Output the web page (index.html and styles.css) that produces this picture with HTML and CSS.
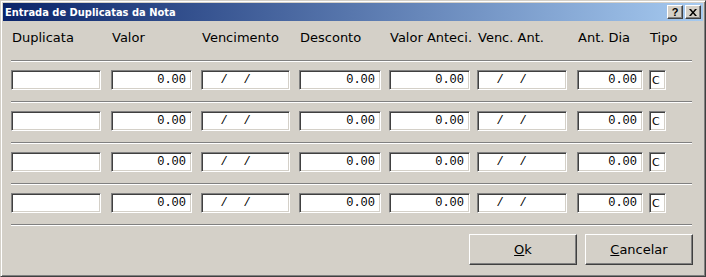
FILE: index.html
```html
<!DOCTYPE html>
<html lang="pt">
<head>
  <meta charset="UTF-8">
  <title>Entrada de Duplicatas da Nota</title>
  <link rel="stylesheet" href="styles.css">
</head>
<body>
  <div class="window">
    <div class="titlebar">
      <span class="title">Entrada de Duplicatas da Nota</span>
      <div class="caption">
        <button class="cap help">?</button>
        <button class="cap close">
          <svg width="8" height="7" viewBox="0 0 8 7"><path d="M0 0h2l2 2.5L6 0h2L5 3.5 8 7H6L4 4.5 2 7H0l3-3.5z" fill="#000"/></svg>
        </button>
      </div>
    </div>
    <div class="client">
      <div class="grid labels">
        <span>Duplicata</span>
        <span>Valor</span>
        <span>Vencimento</span>
        <span>Desconto</span>
        <span>Valor Anteci.</span>
        <span>Venc. Ant.</span>
        <span>Ant. Dia</span>
        <span>Tipo</span>
      </div>
      <div class="sep"></div>
      <div class="grid row">
        <input class="f-dup" value="">
        <input class="f-num w81" value="0.00">
        <input class="f-date" value="  /  /">
        <input class="f-num w82" value="0.00">
        <input class="f-num w81" value="0.00">
        <input class="f-date w90" value="  /  /">
        <input class="f-num w66" value="0.00">
        <input class="f-tipo" value="C">
      </div>
      <div class="sep"></div>
      <div class="grid row">
        <input class="f-dup" value="">
        <input class="f-num w81" value="0.00">
        <input class="f-date" value="  /  /">
        <input class="f-num w82" value="0.00">
        <input class="f-num w81" value="0.00">
        <input class="f-date w90" value="  /  /">
        <input class="f-num w66" value="0.00">
        <input class="f-tipo" value="C">
      </div>
      <div class="sep"></div>
      <div class="grid row">
        <input class="f-dup" value="">
        <input class="f-num w81" value="0.00">
        <input class="f-date" value="  /  /">
        <input class="f-num w82" value="0.00">
        <input class="f-num w81" value="0.00">
        <input class="f-date w90" value="  /  /">
        <input class="f-num w66" value="0.00">
        <input class="f-tipo" value="C">
      </div>
      <div class="sep"></div>
      <div class="grid row">
        <input class="f-dup" value="">
        <input class="f-num w81" value="0.00">
        <input class="f-date" value="  /  /">
        <input class="f-num w82" value="0.00">
        <input class="f-num w81" value="0.00">
        <input class="f-date w90" value="  /  /">
        <input class="f-num w66" value="0.00">
        <input class="f-tipo" value="C">
      </div>
      <div class="sep"></div>
      <div class="actions">
        <button class="btn"><u>O</u>k</button>
        <button class="btn"><u>C</u>ancelar</button>
      </div>
    </div>
  </div>
</body>
</html>
```

FILE: styles.css
```css
:root {
  --face: #d4d0c8;
  --shadow: #808080;
  --dark: #404040;
  --light: #ffffff;
}
body {
  margin: 0;
  background: var(--face);
  font-family: 'DejaVu Sans', sans-serif;
}
.window {
  width: 706px;
  height: 277px;
  box-sizing: border-box;
  background: var(--face);
  border-top: 1px solid var(--face);
  border-left: 1px solid var(--face);
  border-right: 1px solid var(--dark);
  border-bottom: 1px solid var(--dark);
  box-shadow: inset 1px 1px var(--light), inset -1px -1px var(--shadow);
  padding: 2px;
}
.titlebar {
  height: 18px;
  display: flex;
  align-items: center;
  justify-content: space-between;
  background: linear-gradient(to right, #0a246a, #a6caf0);
  padding: 0 2px 0 2px;
}
.title {
  color: #fff;
  font-family: 'DejaVu Sans Condensed', 'DejaVu Sans', sans-serif;
  font-weight: bold;
  font-size: 11px;
  line-height: 18px;
  padding-top: 1px;
}
.caption {
  display: flex;
  gap: 2px;
}
.cap {
  width: 16px;
  height: 14px;
  padding: 0;
  margin: 0;
  background: var(--face);
  border-top: 1px solid var(--light);
  border-left: 1px solid var(--light);
  border-right: 1px solid var(--dark);
  border-bottom: 1px solid var(--dark);
  box-shadow: inset -1px -1px var(--shadow);
  display: flex;
  align-items: center;
  justify-content: center;
  font-family: 'Liberation Sans', sans-serif;
  font-weight: bold;
  font-size: 11px;
  line-height: 12px;
  color: #000;
}
.client {
  padding: 9px 10px 0 8px;
}
.grid {
  display: grid;
  grid-template-columns: 100px 90px 98px 90px 88px 100px 72px 17px;
}
.labels span {
  font-size: 13px;
  line-height: 16px;
  color: #000;
  padding-left: 1px;
}
.sep {
  height: 0;
  border-top: 1px solid var(--shadow);
  border-bottom: 1px solid var(--light);
  margin-right: 1px;
}
.labels + .sep {
  margin-top: 14px;
}
.row {
  margin: 8px 0 11px;
}
.row input {
  box-sizing: border-box;
  height: 20px;
  width: 89px;
  margin: 0;
  padding: 0 5px 0 3px;
  background: #fff;
  border-top: 1px solid var(--shadow);
  border-left: 1px solid var(--shadow);
  border-right: 1px solid var(--light);
  border-bottom: 1px solid var(--light);
  box-shadow: inset 1px 1px var(--dark), inset -1px -1px var(--face);
  font-family: 'Liberation Mono', monospace;
  font-size: 12px;
  color: #000;
  outline: none;
  white-space: pre;
}
.row .f-dup { width: 90px; }
.row .f-num { text-align: right; }
.row .f-date { letter-spacing: 0.5px; }
.row .w81 { width: 81px; }
.row .w82 { width: 82px; }
.row .w90 { width: 90px; }
.row .w66 { width: 66px; }
.row .f-tipo { width: 17px; padding: 0 2px; font-family: 'DejaVu Sans', sans-serif; font-size: 11px; }
.actions {
  display: flex;
  justify-content: flex-end;
  gap: 8px;
  margin-top: 8px;
}
.btn {
  width: 108px;
  height: 31px;
  margin: 0;
  padding: 0;
  background: var(--face);
  border-top: 1px solid var(--light);
  border-left: 1px solid var(--light);
  border-right: 1px solid var(--dark);
  border-bottom: 1px solid var(--dark);
  box-shadow: inset -1px -1px var(--shadow);
  font-family: 'DejaVu Sans', sans-serif;
  font-size: 13px;
  color: #000;
}
```
